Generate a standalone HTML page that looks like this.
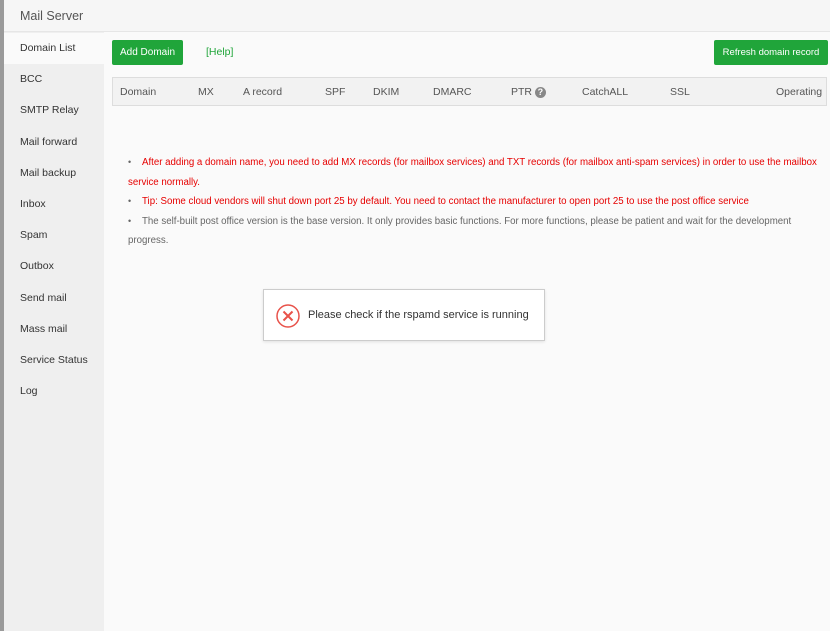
<!DOCTYPE html>
<html><head><style>
*{margin:0;padding:0;box-sizing:border-box}
body{width:830px;height:631px;overflow:hidden;background:#fafafa;font-family:"Liberation Sans",sans-serif;font-size:12px;color:#333;position:relative}
.strip{position:absolute;left:0;top:0;width:4px;height:631px;background:#9a9a9a}
.head{position:absolute;left:4px;top:0;width:826px;height:32px;background:#f6f6f6;border-bottom:1px solid #e6e6e6;font-size:12.5px;color:#555;padding:9px 0 0 16px}
.side{position:absolute;left:4px;top:32px;width:100px;height:599px;background:#efefef;padding-top:1px}
.side div{height:31.2px;line-height:31px;padding-left:16px;font-size:10.5px;color:#333}
.side div.on{background:#fafafa}
.btn{position:absolute;top:40px;height:25px;background:#20a53a;color:#fff;border-radius:2px;font-size:10px;line-height:25px;text-align:center;white-space:nowrap}
.tbl{position:absolute;left:112px;top:77px;width:715px;height:29px;border:1px solid #ddd;background:#f2f2f2;font-size:10.5px;color:#555}
.tbl span{position:absolute;top:8px}
ul{position:absolute;left:128px;top:153px;width:700px;font-size:9.7px;line-height:19.5px;list-style:none;white-space:nowrap}
li{position:relative}
li:before{content:"•";position:absolute;left:0;color:#666;font-size:9px}
li span{padding-left:14px}
.r{color:#e60000}.g{color:#666}
.box{position:absolute;left:263px;top:289px;width:282px;height:52px;background:#fff;border:1px solid #ccc;box-shadow:0 1px 3px rgba(0,0,0,.1)}
</style></head><body>
<div class="strip"></div>
<div class="head">Mail Server</div>
<div class="side">
<div class="on">Domain List</div><div>BCC</div><div>SMTP Relay</div><div>Mail forward</div><div>Mail backup</div><div>Inbox</div><div>Spam</div><div>Outbox</div><div>Send mail</div><div>Mass mail</div><div>Service Status</div><div>Log</div>
</div>
<div class="btn" style="left:112px;width:71px">Add Domain</div>
<div style="position:absolute;left:206px;top:46px;font-size:10.5px;color:#20a53a">[Help]</div>
<div class="btn" style="left:714px;width:114px;font-size:9.5px">Refresh domain record</div>
<div class="tbl">
<span style="left:7px">Domain</span><span style="left:85px">MX</span><span style="left:130px">A record</span><span style="left:212px">SPF</span><span style="left:260px">DKIM</span><span style="left:320px">DMARC</span><span style="left:398px">PTR <b style="display:inline-block;width:11px;height:11px;border-radius:50%;background:#888;color:#fff;font-size:9px;text-align:center;line-height:11px">?</b></span><span style="left:469px">CatchALL</span><span style="left:557px">SSL</span><span style="left:663px">Operating</span>
</div>
<ul>
<li class="r"><span>After adding a domain name, you need to add MX records (for mailbox services) and TXT records (for mailbox anti-spam services) in order to use the mailbox</span><br>service normally.</li>
<li class="r"><span>Tip: Some cloud vendors will shut down port 25 by default. You need to contact the manufacturer to open port 25 to use the post office service</span></li>
<li class="g"><span>The self-built post office version is the base version. It only provides basic functions. For more functions, please be patient and wait for the development</span><br>progress.</li>
</ul>
<div class="box">
<svg style="position:absolute;left:12px;top:14px" width="24" height="24" viewBox="0 0 24 24"><circle cx="12" cy="12" r="11" fill="none" stroke="#e8524a" stroke-width="1.5"/><path d="M7.5 7.5L16.5 16.5M16.5 7.5L7.5 16.5" stroke="#e8524a" stroke-width="2"/></svg>
<div style="position:absolute;left:44px;top:19px;font-size:11px;color:#333">Please check if the rspamd service is running</div>
</div>
</body></html>
